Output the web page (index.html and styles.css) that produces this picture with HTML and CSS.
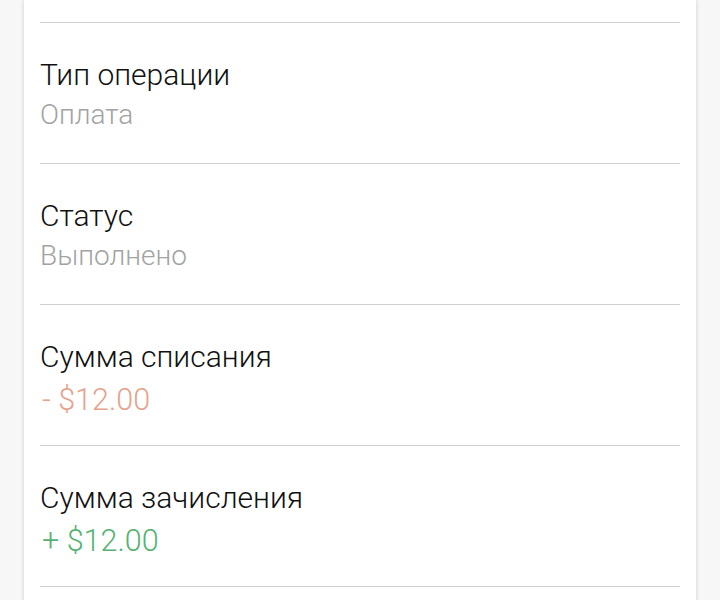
FILE: index.html
```html
<!DOCTYPE html>
<html lang="ru">
<head>
    <meta charset="UTF-8">
    <meta name="viewport" content="width=device-width, initial-scale=1.0">
    <title>Детали операции</title>
    <link rel="stylesheet" href="styles.css">
</head>
<body>
    <div class="card">
        <!-- верхняя часть карточки уходит за край экрана -->
        <div class="row row-top"></div>

        <div class="row">
            <div class="label">Тип операции</div>
            <div class="value">Оплата</div>
        </div>

        <div class="row">
            <div class="label">Статус</div>
            <div class="value">Выполнено</div>
        </div>

        <div class="row">
            <div class="label">Сумма списания</div>
            <div class="value amount minus">- $12.00</div>
        </div>

        <div class="row">
            <div class="label">Сумма зачисления</div>
            <div class="value amount plus">+ $12.00</div>
        </div>

        <div class="row"></div>
    </div>
</body>
</html>
```

FILE: styles.css
```css
html, body {
    margin: 0;
    padding: 0;
    height: 100%;
    overflow: hidden;
}
body {
    background-color: #f7f7f7;
    font-family: Roboto, "Liberation Sans", sans-serif;
}
.card {
    margin: 0 24px;
    padding: 0 16px;
    min-height: 100%;
    background: #ffffff;
    box-shadow: 0 0 4px rgba(0, 0, 0, 0.18);
}
.row {
    padding: 32px 0 28px;
    border-bottom: 1px solid #cfcfcf;
}
.row-top {
    padding: 0;
    height: 22px;
}
.label, .value {
    line-height: 40px;
    font-weight: 300;
}
.label {
    font-size: 30px;
    color: #111111;
}
.value {
    font-size: 28px;
    color: #a3a3a3;
}
.value.amount {
    font-size: 30.5px;
    padding-left: 2px;
    margin: 3px 0 -3px; /* цифры в оригинале сидят чуть ниже */
}
.value.minus {
    color: #e5a38d;
}
.value.plus {
    color: #55b273;
}
```
